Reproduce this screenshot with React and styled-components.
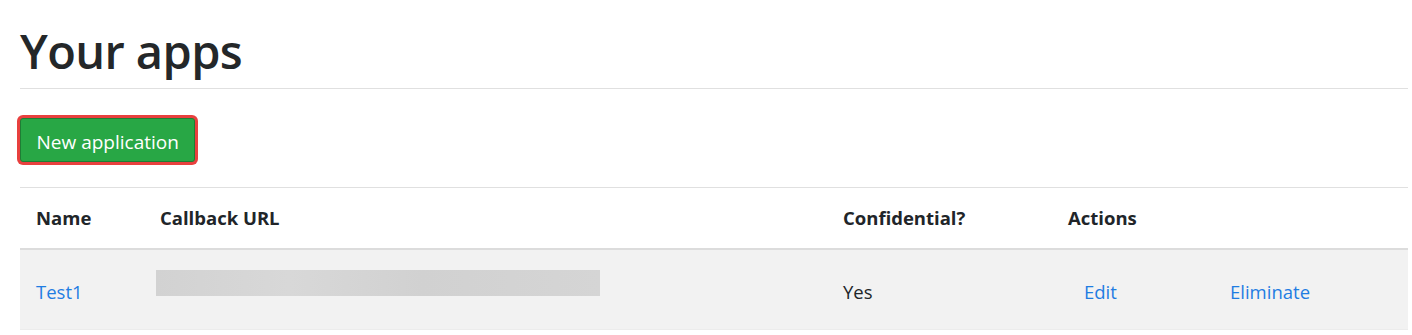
import React from 'react';
import styled, { createGlobalStyle } from 'styled-components';

const GlobalStyle = createGlobalStyle`
  body {
    margin: 0;
    background: #fff;
    font-family: "Open Sans", "Noto Sans", sans-serif;
    color: #212529;
  }
`;

const Page = styled.main`
  padding: 19px 4px 0 20px;
`;

const Header = styled.header`
  padding-bottom: 9px;
  border-bottom: 1px solid #e0e0e0;
`;

const Title = styled.h1`
  margin: 0;
  padding-top: 2px;
  height: 58px;
  font-size: 47px;
  font-weight: 600;
  line-height: 60px;
  letter-spacing: -0.6px;
  color: #242729;
`;

const Toolbar = styled.div`
  display: flex;
  padding: 29px 0 25px;
`;

const Button = styled.button`
  height: 44px;
  padding: 5px 15.5px 0;
  border: 1px solid #1e7e34;
  border-radius: 3px;
  background: #28a745;
  box-shadow: 0 0 0 3px #e8403e;
  color: #fff;
  font-family: inherit;
  font-size: 19px;
  line-height: 1;
  cursor: pointer;
`;

const Table = styled.div`
  border-top: 1px solid #e0e0e0;
`;

const Row = styled.div`
  display: grid;
  grid-template-columns: 124px 683px 225px 150px 1fr;
  height: ${({ $head }) => ($head ? '60px' : '79px')};
  background: ${({ $head }) => ($head ? '#fff' : '#f2f2f2')};
  border-bottom: ${({ $head }) => ($head ? '2px solid #dcdcdc' : '1px solid #ececec')};
`;

const Cell = styled.div`
  padding: ${({ $head }) => ($head ? '15px 16px' : '27px 16px 0')};
  padding-left: ${({ $indent }) => ($indent ? `${$indent}px` : '16px')};
  font-size: 18.5px;
  line-height: 30px;
  font-weight: ${({ $head }) => ($head ? 700 : 400)};
  white-space: nowrap;
`;

const Link = styled.a`
  color: #1f7de2;
  text-decoration: none;
`;

const Blur = styled.div`
  width: 444px;
  height: 26px;
  margin: -7px 0 0 -4px;
  background: linear-gradient(90deg, #d2d2d2, #d8d8d8 30%, #d1d1d1 60%, #d5d5d5);
`;

const apps = [{ name: 'Test1', confidential: 'Yes' }];

const App = () => (
  <>
    <GlobalStyle />
    <Page>
      <Header>
        <Title>Your apps</Title>
      </Header>
      <Toolbar>
        <Button type="button">New application</Button>
      </Toolbar>
      <Table>
        <Row $head>
          <Cell $head>Name</Cell>
          <Cell $head>Callback URL</Cell>
          <Cell $head>Confidential?</Cell>
          <Cell $head>Actions</Cell>
          <Cell $head />
        </Row>
        {apps.map((app) => (
          <Row key={app.name}>
            <Cell><Link href="#">{app.name}</Link></Cell>
            <Cell><Blur /></Cell>
            <Cell>{app.confidential}</Cell>
            <Cell $indent={32}><Link href="#">Edit</Link></Cell>
            <Cell $indent={28}><Link href="#">Eliminate</Link></Cell>
          </Row>
        ))}
      </Table>
    </Page>
  </>
);

export default App;
